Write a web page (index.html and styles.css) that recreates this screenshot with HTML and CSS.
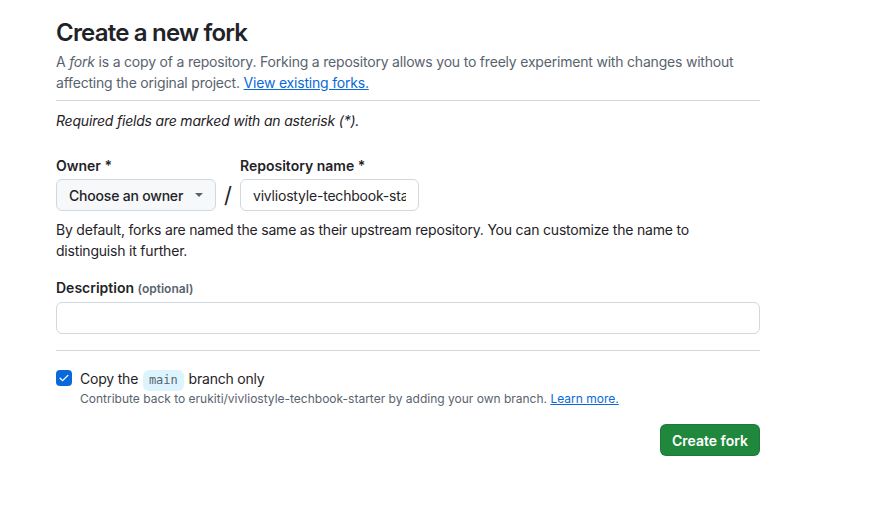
FILE: index.html
```html
<!DOCTYPE html>
<html>
<head>
<meta charset="utf-8">
<link rel="stylesheet" href="styles.css">
</head>
<body>
<main class="page">
  <h1 class="title">Create a new fork</h1>
  <p class="lead">A <em>fork</em> is a copy of a repository. Forking a repository allows you to freely experiment with changes without affecting the original project. <a href="#">View existing forks.</a></p>
  <hr class="divider">
  <p class="required">Required fields are marked with an asterisk (*).</p>

  <div class="name-row">
    <div class="field">
      <label class="label">Owner *</label>
      <button class="select">Choose an owner <span class="caret"></span></button>
    </div>
    <span class="slash">/</span>
    <div class="field">
      <label class="label">Repository name *</label>
      <input class="input repo" value="vivliostyle-techbook-starter">
    </div>
  </div>
  <p class="help">By default, forks are named the same as their upstream repository. You can customize the name to distinguish it further.</p>

  <label class="label desc-label">Description <span class="optional">(optional)</span></label>
  <input class="input desc">

  <hr class="divider second">

  <div class="check-row">
    <span class="checkbox">
      <svg viewBox="0 0 16 16" width="12" height="12"><path d="M2.8 8.3l3.3 3.2L13.2 4.5" fill="none" stroke="#fff" stroke-width="1.8" stroke-linecap="round" stroke-linejoin="round"/></svg>
    </span>
    <div class="check-text">
      <div class="check-label">Copy the <code class="branch">main</code> branch only</div>
      <div class="note">Contribute back to erukiti/vivliostyle-techbook-starter by adding your own branch. <a href="#">Learn more.</a></div>
    </div>
  </div>

  <div class="actions">
    <button class="btn-primary">Create fork</button>
  </div>
</main>
</body>
</html>
```
FILE: styles.css
```css
* { box-sizing: border-box; }
html, body { margin: 0; padding: 0; background: #fff; }
body {
  font-family: Inter, "Liberation Sans", Arial, sans-serif;
  color: #1f2328;
  font-size: 14px;
  line-height: 21px;
}
.page {
  width: 704px;
  margin-left: 56px;
  padding-top: 15px;
}
.title {
  margin: 0;
  font-size: 24px;
  line-height: 36px;
  font-weight: 600;
  letter-spacing: -0.8px;
}
.lead {
  margin: 0 0 7px;
  color: #59636e;
  letter-spacing: -0.2px;
}
a { color: #0969da; text-decoration: underline; }
.divider {
  border: 0;
  border-top: 1px solid #d1d9e0;
  margin: 0 0 9px;
  height: 0;
}
.required {
  margin: 0 0 24px;
  font-style: italic;
  letter-spacing: -0.2px;
}
.name-row {
  display: flex;
  align-items: flex-end;
}
.field { display: flex; flex-direction: column; }
.label {
  font-weight: 600;
  margin-bottom: 3px;
  display: block;
}
.select {
  height: 32px;
  width: 160px;
  background: #f6f8fa;
  border: 1px solid #d1d9e0;
  border-radius: 6px;
  font: inherit;
  font-weight: 500;
  letter-spacing: -0.2px;
  color: #1f2328;
  padding: 0 12px;
  display: flex;
  align-items: center;
  justify-content: space-between;
}
.caret {
  width: 0; height: 0;
  border-left: 4px solid transparent;
  border-right: 4px solid transparent;
  border-top: 4px solid #59636e;
}
.slash {
  width: 24px;
  text-align: center;
  font-size: 22px;
  line-height: 32px;
  height: 32px;
  color: #1f2328;
}
.input {
  height: 32px;
  border: 1px solid #d1d9e0;
  border-radius: 6px;
  font: inherit;
  letter-spacing: -0.2px;
  color: #1f2328;
  padding: 0 12px;
  background: #fff;
}
.repo { width: 179px; }
.help {
  margin: 8px 0 16px;
  letter-spacing: -0.2px;
}
.desc-label { margin-bottom: 3px; }
.optional {
  font-size: 12px;
  color: #59636e;
  letter-spacing: 0;
}
.desc { width: 704px; display: block; }
.second { margin: 16px 0 17px; }
.check-row {
  display: flex;
  align-items: flex-start;
}
.checkbox {
  width: 16px; height: 16px;
  background: #0969da;
  border-radius: 4px;
  margin-top: 1.5px;
  margin-right: 8px;
  display: flex;
  align-items: center;
  justify-content: center;
  flex: none;
}
.check-label { height: 21px; line-height: 21px; letter-spacing: -0.2px; }
.branch {
  display: inline-block;
  height: 21px;
  line-height: 21px;
  font-family: "DejaVu Sans Mono", "Liberation Mono", monospace;
  font-size: 12px;
  letter-spacing: 0;
  background: #ddf4ff;
  color: #59636e;
  border-radius: 6px;
  padding: 0 6px;
  margin: 0 1px;
}
.note {
  font-size: 12px;
  line-height: 18px;
  color: #59636e;
  margin-top: 1px;
}
.actions {
  display: flex;
  justify-content: flex-end;
  margin-top: 16px;
}
.btn-primary {
  height: 32px;
  width: 100px;
  background: #1f883d;
  color: #fff;
  border: 1px solid rgba(31,35,40,0.15);
  border-radius: 6px;
  font: inherit;
  font-weight: 600;
}
```
